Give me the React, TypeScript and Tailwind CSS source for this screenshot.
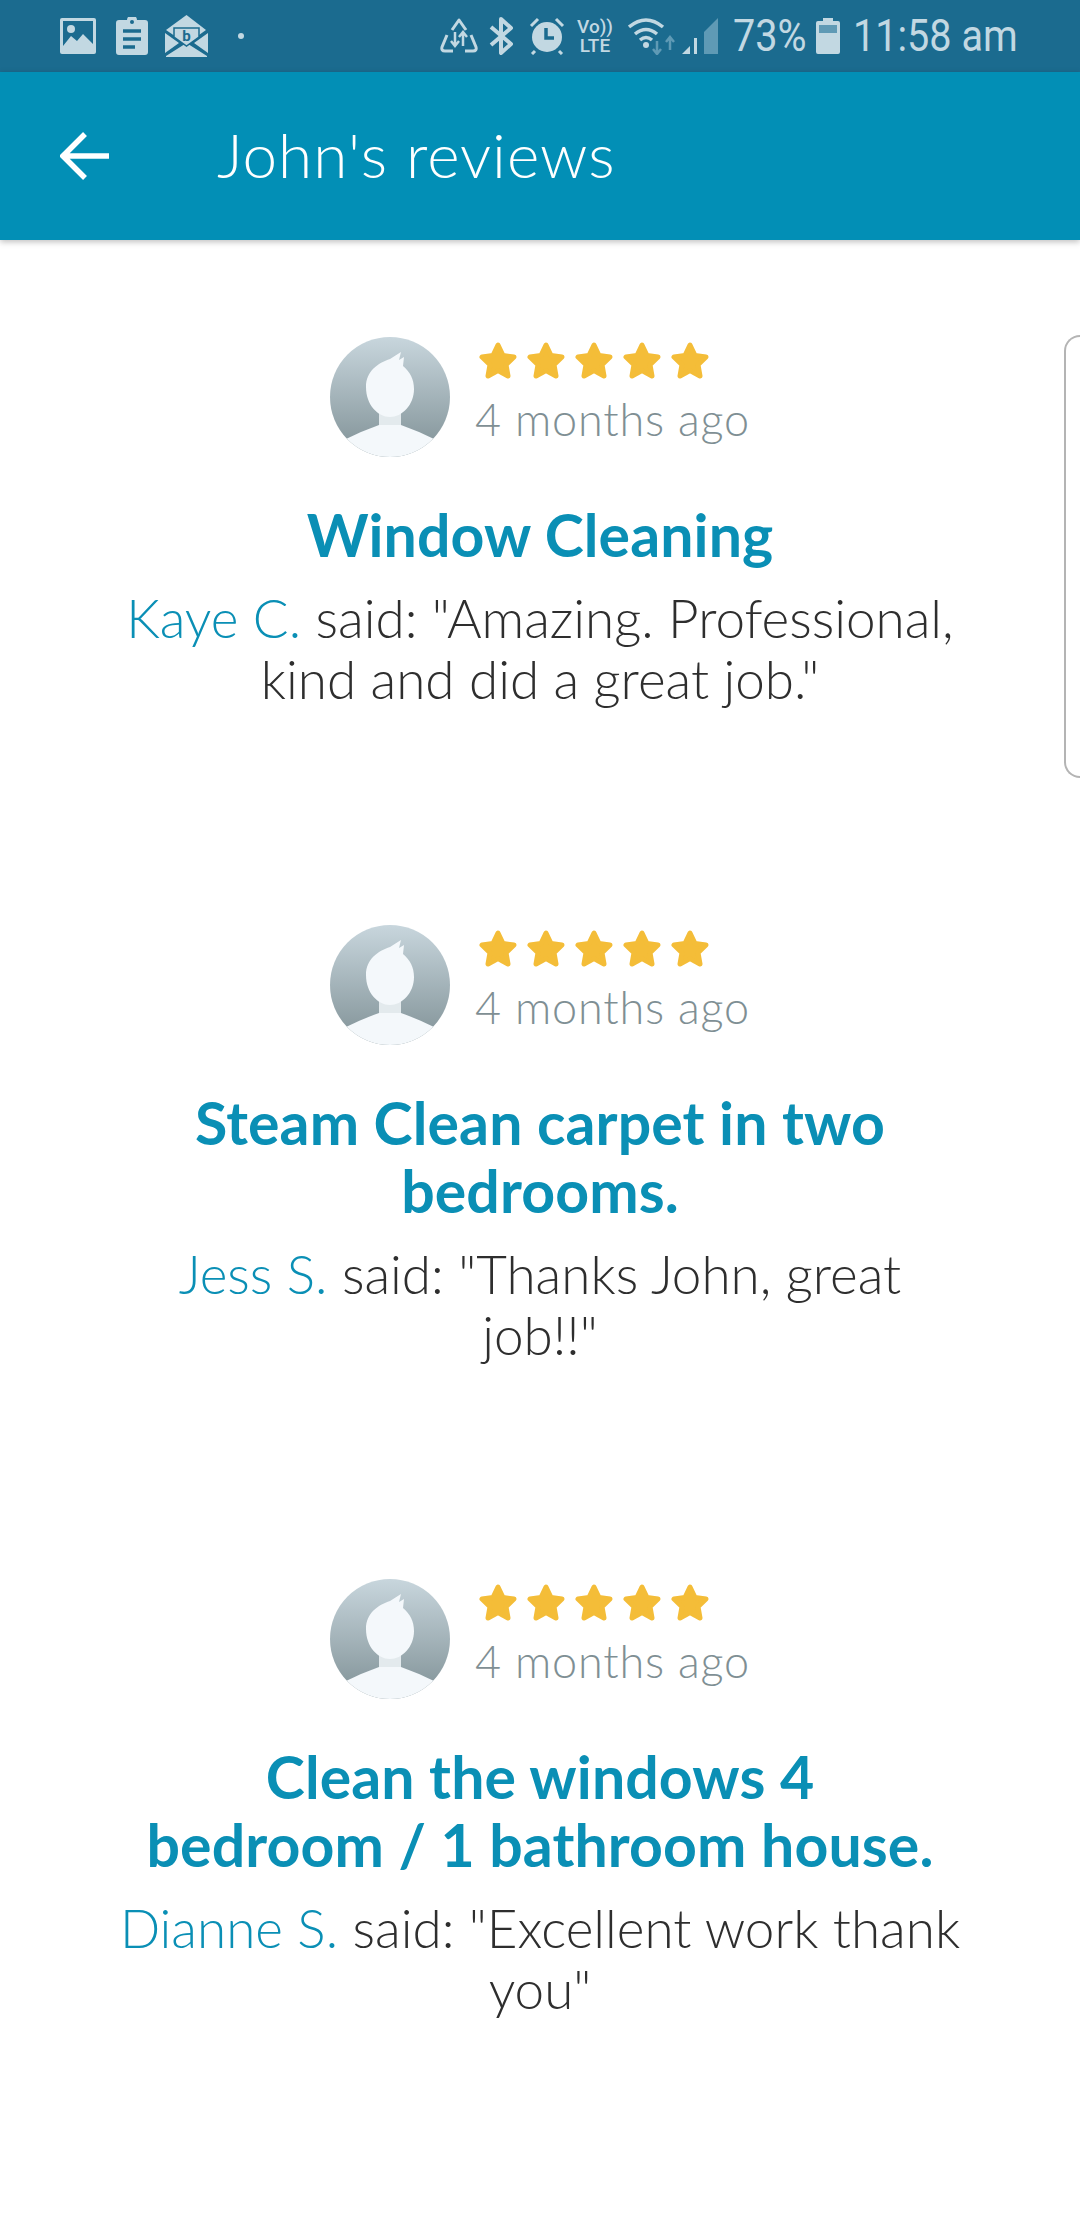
const TEAL = "#0a8fb5";

const StatusIcons = () => (
  <div className="flex items-center h-[72px] bg-[#1b6b8f] text-[#c2d8e2] pl-[60px] pr-[64px] shrink-0">
    {/* picture */}
    <svg width="36" height="36" viewBox="0 0 36 36" className="mr-[20px]">
      <rect x="0" y="0" width="36" height="36" rx="2" fill="#c2d8e2" />
      <rect x="3" y="3" width="30" height="29" fill="#1b6b8f" />
      <circle cx="11" cy="11" r="4" fill="#c2d8e2" />
      <path d="M3 28 L11 18 L17 23 L23 16 L33 26 V33 H3 Z" fill="#c2d8e2" />
    </svg>
    {/* clipboard */}
    <svg width="32" height="38" viewBox="0 0 32 38" className="mr-[17px]">
      <path d="M3 3 H11 A5 5 0 0 1 21 3 H29 A3 3 0 0 1 32 6 V35 A3 3 0 0 1 29 38 H3 A3 3 0 0 1 0 35 V6 A3 3 0 0 1 3 3 Z" fill="#c2d8e2" />
      <circle cx="16" cy="5" r="2" fill="#1b6b8f" />
      <path d="M7 14 H25 M7 22 H25 M7 30 H19" stroke="#1b6b8f" strokeWidth="3.5" />
    </svg>
    {/* open mail */}
    <svg width="43" height="42" viewBox="0 0 43 42" className="mr-[30px]">
      <path d="M21.5 0 L41 15 L21.5 29 L1 15 Z" fill="#c2d8e2" />
      <path d="M0 18 L14 28 L0 38 Z M43 18 L29 28 L43 38 Z M1 41 L21.5 28 L42 41 V42 H1 Z" fill="#c2d8e2" />
      <path d="M9 13 H34 V22 L21.5 31 L9 22 Z" fill="#c2d8e2" stroke="#1b6b8f" strokeWidth="1.5" />
      <text x="21.5" y="26" textAnchor="middle" fontSize="15" fontWeight="700" fontFamily="Roboto, sans-serif" fill="#1b6b8f">b</text>
    </svg>
    <span className="w-[6px] h-[6px] rounded-full bg-[#c2d8e2]" />
    <div className="flex-1" />
    {/* recycle / data saver */}
    <svg width="38" height="36" viewBox="0 0 38 36" fill="none" stroke="#c2d8e2" strokeWidth="3" className="mr-[11px]">
      <path d="M12 12 L19 2 L26 12" strokeLinejoin="round" />
      <path d="M7 17 L2 29 Q1 33 5 33 H13 M25 33 H33 Q37 33 36 29 L31 17" strokeLinejoin="round" />
      <path d="M15 14 V27 M11 23 L15 28 L19 23 M23 28 V15 M19 19 L23 14 L27 19" strokeWidth="2.5" />
    </svg>
    {/* bluetooth */}
    <svg width="24" height="38" viewBox="0 0 24 38" fill="none" stroke="#c2d8e2" strokeWidth="4" strokeLinejoin="round" className="mr-[16px]">
      <path d="M2 10 L22 27 L12 36 V2 L22 11 L2 28" />
    </svg>
    {/* alarm */}
    <svg width="36" height="38" viewBox="0 0 36 38" className="mr-[12px]">
      <circle cx="18" cy="20" r="15" fill="#c2d8e2" />
      <path d="M2 9 L9 2 M34 9 L27 2 M6 34 L3 37 M30 34 L33 37" stroke="#c2d8e2" strokeWidth="3" />
      <path d="M17 11 V21 H25" fill="none" stroke="#1b6b8f" strokeWidth="3.5" />
    </svg>
    {/* volte */}
    <div className="flex flex-col items-center w-[36px] mr-[15px] font-['Roboto',sans-serif] font-medium text-[19px] leading-[19px]">
      <span>Vo))</span>
      <span>LTE</span>
    </div>
    {/* wifi */}
    <svg width="48" height="38" viewBox="0 0 48 38" fill="none" className="mr-[6px]">
      <path d="M1 10 Q18 -4 35 10 M7 17 Q18 8 29 17 M12 23 Q18 18 24 23" stroke="#c2d8e2" strokeWidth="3.5" />
      <circle cx="18" cy="28" r="3" fill="#c2d8e2" />
      <path d="M29 24 V36 M25 32 L29 37 L33 32" stroke="#5f9ab5" strokeWidth="2.5" />
      <path d="M42 33 V21 M38 25 L42 20 L46 25" stroke="#5f9ab5" strokeWidth="2.5" />
    </svg>
    {/* signal */}
    <svg width="36" height="36" viewBox="0 0 36 36" className="mr-[15px]">
      <path d="M0 36 L8 28 V36 Z" fill="#c2d8e2" />
      <rect x="12" y="20" width="3" height="16" fill="#c2d8e2" />
      <path d="M22 14 L36 0 V36 H22 Z" fill="#5f9ab5" />
    </svg>
    <span className="font-['Roboto',sans-serif] text-[44px] leading-none mr-[13px] w-[70px] whitespace-nowrap origin-left scale-x-[0.9]">73%</span>
    {/* battery */}
    <svg width="24" height="36" viewBox="0 0 24 36" className="mr-[13px]">
      <path d="M7 0 H17 V3 H22 A2 2 0 0 1 24 5 V34 A2 2 0 0 1 22 36 H2 A2 2 0 0 1 0 34 V5 A2 2 0 0 1 2 3 H7 Z" fill="#c2d8e2" />
      <rect x="3" y="7" width="18" height="8" fill="#5f9ab5" />
    </svg>
    <span className="font-['Roboto',sans-serif] text-[44px] leading-none w-[163px] whitespace-nowrap origin-left scale-x-[0.9]">11:58 am</span>
  </div>
);

const Header = () => (
  <header className="relative z-10 flex items-center h-[168px] bg-[#028fb6] shadow-[0_2px_6px_rgba(0,0,0,0.25)] shrink-0">
    <svg width="50" height="50" viewBox="0 0 50 50" fill="none" stroke="#fff" strokeWidth="5.5" className="ml-[60px] mr-[107px]">
      <path d="M49 25 H4 M25 3 L3 25 L25 47" />
    </svg>
    <h1 className="text-white text-[62px] font-light tracking-[1px] -mt-[3px]">John's reviews</h1>
  </header>
);

const Star = () => (
  <svg width="38" height="38" viewBox="0 0 38 38">
    <path
      d="M19 3 L24 13.5 L35 15 L27 22.8 L29 34 L19 28.6 L9 34 L11 22.8 L3 15 L14 13.5 Z"
      fill="#f4bd38"
      stroke="#f4bd38"
      strokeWidth="5"
      strokeLinejoin="round"
    />
  </svg>
);

const Avatar = () => (
  <svg width="120" height="120" viewBox="0 0 120 120" className="shrink-0">
    <defs>
      <linearGradient id="avatarBg" x1="0" y1="0" x2="0" y2="1">
        <stop offset="0" stopColor="#c8d6dd" />
        <stop offset="1" stopColor="#7f9095" />
      </linearGradient>
      <clipPath id="avatarClip">
        <circle cx="60" cy="60" r="60" />
      </clipPath>
    </defs>
    <circle cx="60" cy="60" r="60" fill="url(#avatarBg)" />
    <g clipPath="url(#avatarClip)">
      <rect x="49" y="72" width="22" height="20" fill="#e3eaed" />
      <path d="M16 102 Q32 94 49 88 H71 Q88 94 104 102 V125 H16 Z" fill="#f4f8fb" />
      <path d="M36 50 C36 34 48 26 60 22 L71 15 L69 23 L74 20 L73 29 C80 35 84 42 84 52 C84 68 72 80 60 80 C48 80 36 68 36 50 Z" fill="#f4f8fb" />
    </g>
  </svg>
);

type ReviewProps = {
  title: string[];
  name: string;
  lines: string[];
  height: string;
};

const Review = ({ title, name, lines, height }: ReviewProps) => (
  <section className={`flex flex-col items-center ${height}`}>
    <div className="flex items-start gap-[25px] h-[120px]">
      <Avatar />
      <div className="flex flex-col pt-[5px]">
        <div className="flex gap-[10px] ml-[4px]">
          {[0, 1, 2, 3, 4].map((i) => (
            <Star key={i} />
          ))}
        </div>
        <span className="text-[#7f8f94] text-[45px] leading-[50px] mt-[14px] font-light tracking-[0.8px]">4 months ago</span>
      </div>
    </div>
    <h2 className="mt-[44px] text-center font-bold text-[59px] leading-[68px] tracking-[0.1px]" style={{ color: TEAL }}>
      {title.map((t) => (
        <div key={t}>{t}</div>
      ))}
    </h2>
    <p className="mt-[18px] text-center text-[#2e2e2e] text-[53px] leading-[61px] font-light">
      {lines.map((l, i) => (
        <span key={l} className="block">
          {i === 0 && <span style={{ color: TEAL }}>{name} </span>}
          {l}
        </span>
      ))}
    </p>
  </section>
);

export default function App() {
  return (
    <div className="relative w-[1080px] h-[2220px] overflow-hidden bg-white flex flex-col font-['Lato',sans-serif]">
      <StatusIcons />
      <Header />
      <main className="flex flex-col pt-[97px]">
        <Review
          title={["Window Cleaning"]}
          name="Kaye C."
          lines={['said: "Amazing. Professional,', 'kind and did a great job."']}
          height="h-[588px]"
        />
        <Review
          title={["Steam Clean carpet in two", "bedrooms."]}
          name="Jess S."
          lines={['said: "Thanks John, great', 'job!!"']}
          height="h-[654px]"
        />
        <Review
          title={["Clean the windows 4", "bedroom / 1 bathroom house."]}
          name="Dianne S."
          lines={['said: "Excellent work thank', 'you"']}
          height="h-[500px]"
        />
      </main>
      {/* edge panel handle */}
      <div className="absolute top-[335px] right-0 w-[16px] h-[443px] border-2 border-r-0 border-[#b4b4b4] rounded-l-[16px]" />
    </div>
  );
}
